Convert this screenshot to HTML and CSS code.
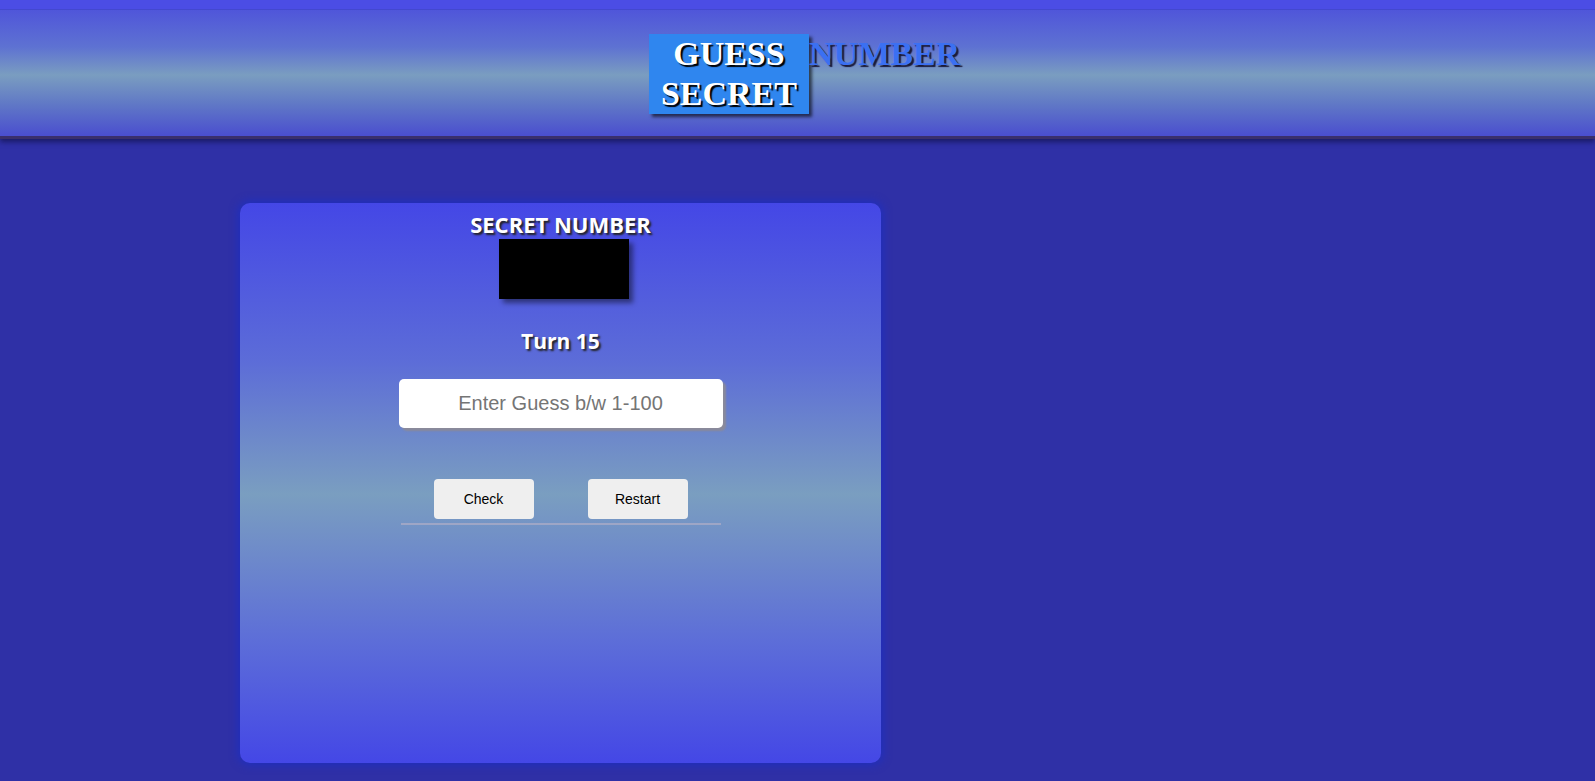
FILE: index.html
```html
<!DOCTYPE html>
<html lang="en">
<head>
<meta charset="utf-8">
<title>Guess Secret Number</title>
<link rel="stylesheet" href="styles.css">
</head>
<body>
<header class="top">
  <h1 class="title">
    <span class="title-box">GUESS<br>SECRET</span>
    <span class="title-rest">NUMBER</span>
  </h1>
</header>
<main class="page">
  <section class="card">
    <h2 class="card-heading">SECRET NUMBER</h2>
    <div class="secret"></div>
    <h3 class="turn">Turn 15</h3>
    <input class="guess" type="text" placeholder="Enter Guess b/w 1-100">
    <div class="actions">
      <button class="btn">Check</button>
      <button class="btn">Restart</button>
    </div>
    <hr class="rule">
  </section>
</main>
</body>
</html>
```

FILE: styles.css
```css
* { box-sizing: border-box; }

html, body {
  margin: 0;
  padding: 0;
}

body {
  background: #2f30a6;
  min-height: 781px;
  font-family: "Open Sans", "Noto Sans", sans-serif;
}

.top {
  border-top: 9px solid #4b4de5;
  border-bottom: 3px solid #3a2f6c;
  background: linear-gradient(to bottom, #4f55da 0%, #5e72d2 30%, #7a9dc0 52%, #6078c6 75%, #4a4ecf 100%);
  box-shadow: 0 3px 5px rgba(10, 10, 50, 0.55), inset 0 1px 0 #4348cf;
  padding: 25px 0 22px 14px;
  display: flex;
  justify-content: center;
}

.title {
  margin: 0;
  display: flex;
  align-items: flex-start;
  font-family: "Liberation Serif", "Times New Roman", serif;
  font-size: 34px;
  line-height: 40px;
  font-weight: bold;
}

.title-box {
  display: block;
  width: 160px;
  height: 80px;
  text-align: center;
  background: #2f86ef;
  color: #ffffff;
  text-shadow: 2px 2px 1px #000;
  box-shadow: 3px 3px 3px rgba(0, 0, 0, 0.6);
}

.title-rest {
  display: block;
  color: #3b70f2;
  font-weight: bold;
  font-size: 34px;
  text-shadow: 2px 2px 1px #1a1a3a;
}

.page {
  padding: 64px 0 0 240px;
}

.card {
  width: 641px;
  height: 560px;
  border-radius: 10px;
  background: linear-gradient(to bottom, #4447e6 0%, #5c6cd8 28%, #7a9ec0 52%, #5d6ed8 78%, #4447e6 100%);
  box-shadow: 0 0 8px 2px #1f2fbf;
  display: flex;
  flex-direction: column;
  align-items: center;
  padding-top: 6px;
}

.card-heading {
  margin: 0;
  color: #fff;
  font-size: 22px;
  line-height: 30px;
  font-weight: bold;
  text-shadow: 2px 2px 2px #222;
}

.secret {
  width: 130px;
  height: 60px;
  margin-left: 6px;
  background: #000;
  box-shadow: 4px 4px 5px rgba(0, 0, 0, 0.45);
}

.turn {
  margin: 28px 0 0;
  color: #fff;
  font-size: 21px;
  line-height: 28px;
  font-weight: bold;
  text-shadow: 2px 2px 2px #222;
}

.guess {
  margin-top: 24px;
  width: 324px;
  height: 49px;
  border: none;
  border-radius: 5px;
  background: #fff;
  box-shadow: 3px 3px 2px #8a8a9a;
  text-align: center;
  font-family: "Liberation Sans", Arial, sans-serif;
  font-size: 20px;
  outline: none;
}

.guess::placeholder {
  color: #757575;
}

.actions {
  margin-top: 51px;
  display: flex;
  gap: 54px;
}

.btn {
  width: 100px;
  height: 40px;
  border: none;
  border-radius: 4px;
  background: #efefef;
  color: #000;
  font-family: "Liberation Sans", Arial, sans-serif;
  font-size: 14px;
}

.rule {
  margin: 4px 0 0;
  width: 320px;
  border: none;
  height: 2px;
  background: #9ea6c6;
}
```
